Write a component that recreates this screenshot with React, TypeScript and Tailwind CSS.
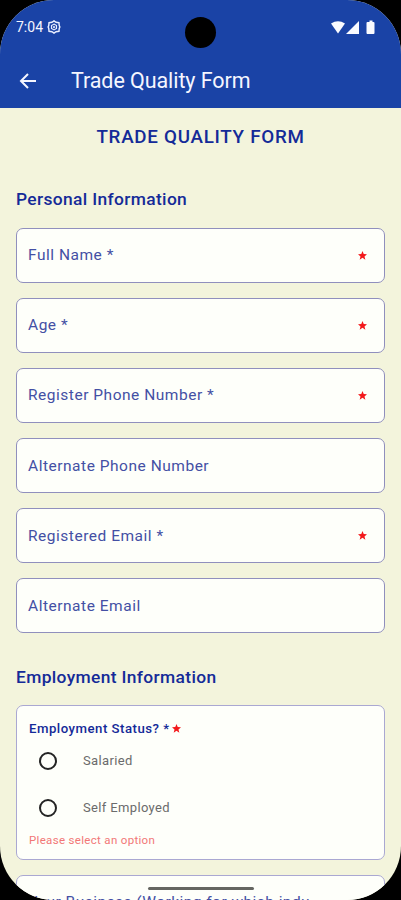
import React from "react";

const fields = [
  { label: "Full Name *", required: true },
  { label: "Age *", required: true },
  { label: "Register Phone Number *", required: true },
  { label: "Alternate Phone Number", required: false },
  { label: "Registered Email *", required: true },
  { label: "Alternate Email", required: false },
];

function Star() {
  return (
    <svg className="size-[9px] shrink-0" viewBox="0 0 24 24" fill="#f31a1c">
      <path d="M12 0l3.3 8.3 8.7.5-6.7 5.6 2.3 8.6L12 18.2 4.4 23l2.3-8.6L0 8.8l8.7-.5z" />
    </svg>
  );
}

function Field({ label, required }: { label: string; required: boolean }) {
  return (
    <div className="flex h-[55px] items-center justify-between rounded-[7px] border border-[#908fbd] bg-[#fefffa] pr-[17px] pl-[11px]">
      <span className="text-[15.5px] leading-5 tracking-[0.52px] whitespace-nowrap text-[#4450a4]">{label}</span>
      {required && <Star />}
    </div>
  );
}

function Option({ label }: { label: string }) {
  return (
    <div className="flex h-[46.5px] items-center pl-[22px]">
      <span className="size-[18px] rounded-full border-2 border-[#242424]" />
      <span className="ml-[26px] text-[13px] leading-4 tracking-[0.35px] text-[#6b6b6b]">{label}</span>
    </div>
  );
}

export default function App() {
  return (
    <div className="h-[900px] w-[401px] overflow-hidden bg-black font-['Roboto',sans-serif]">
      <div className="relative flex h-[900px] flex-col overflow-hidden rounded-[54px] bg-[#f3f4dc]">
        <header className="h-[107.5px] shrink-0 bg-[#1a43a6] text-[#f5f6ff]">
          <div className="flex h-[54px] items-center pl-4">
            <span className="text-[14px] leading-4">7:04</span>
            <svg className="ml-[4px] size-[14px]" viewBox="0 0 24 24" fill="none" stroke="#e8edff">
              <path d="M12 1.500l3.500 2.500 5 .7.500 4.800L22 12l-1 2.500-.5 4.800-5 .7-3.500 2.500-3.500-2.500-5-.7-.5-4.800L2 12l1-2.500.5-4.800 5-.7z" strokeWidth="2.500" />
              <path d="M12 7l4.300 2.500v5L12 17l-4.300-2.500v-5z" strokeWidth="2" />
              <circle cx="12" cy="12" r="1.500" fill="#e8edff" />
            </svg>
            <svg className="ml-auto mr-[26px] h-[15px] w-[45px]" viewBox="0 0 45 15" fill="#fafbff">
              <path d="M1 3.500Q8 -1 15 3.500L8 13.500z" />
              <path d="M29 1v13H16z" />
              <path d="M37.500 2h2V.5h3V2h1q1 0 1 1v10q0 1-1 1h-6q-1 0-1-1V3q0-1 1-1z" />
            </svg>
          </div>
          <div className="flex h-[53px] items-center pl-[18px]">
            <svg className="size-5" viewBox="0 0 20 20" fill="none" stroke="#f5f6ff" strokeWidth="2">
              <path d="M18 10H3M10 3L3 10l7 7" />
            </svg>
            <h1 className="ml-[33px] text-[21.5px] leading-7 tracking-[-0.08px]">Trade Quality Form</h1>
          </div>
        </header>
        <main className="px-4">
          <h2 className="mt-[17.500px] text-center text-[18.800px] leading-6 font-medium tracking-[0.72px] text-[#142a98]">TRADE QUALITY FORM</h2>
          <h3 className="mt-[38px] text-[17.400px] leading-6 font-medium tracking-[0.35px] text-[#142a98]">Personal Information</h3>
          <div className="mt-[16.500px] flex flex-col gap-[15.200px]">
            {fields.map((field) => (
              <Field key={field.label} label={field.label} required={field.required} />
            ))}
          </div>
          <h3 className="mt-[31.500px] text-[17.400px] leading-6 font-medium tracking-[0.35px] text-[#142a98]">Employment Information</h3>
          <section className="mt-[16px] h-[155px] rounded-[7px] border border-[#aaa8d2] bg-[#fefffa] pt-[14px]">
            <div className="flex h-[18px] items-center pl-3">
              <span className="text-[13.200px] leading-4 font-medium tracking-[0.5px] text-[#142a98]">Employment Status? *</span>
              <span className="ml-[2px] flex"><Star /></span>
            </div>
            <Option label="Salaried" />
            <Option label="Self Employed" />
            <p className="pl-3 text-[11.500px] leading-[18px] tracking-[0.32px] text-[#f27777]">Please select an option</p>
          </section>
          <div className="mt-[15.500px] h-[70px] rounded-[7px] border border-[#aaa8d2] bg-[#fefffa] pt-[14px] pl-[11px]">
            <span className="text-[15.500px] leading-5 tracking-[0.46px] whitespace-nowrap text-[#4450a4]">Your Business (Working for which indu</span>
          </div>
        </main>
        <div className="absolute top-[17px] left-[185px] size-[31px] rounded-full bg-black" />
        <div className="absolute top-[887px] left-[148px] h-[3px] w-[106px] rounded-full bg-[#656661]" />
      </div>
    </div>
  );
}
